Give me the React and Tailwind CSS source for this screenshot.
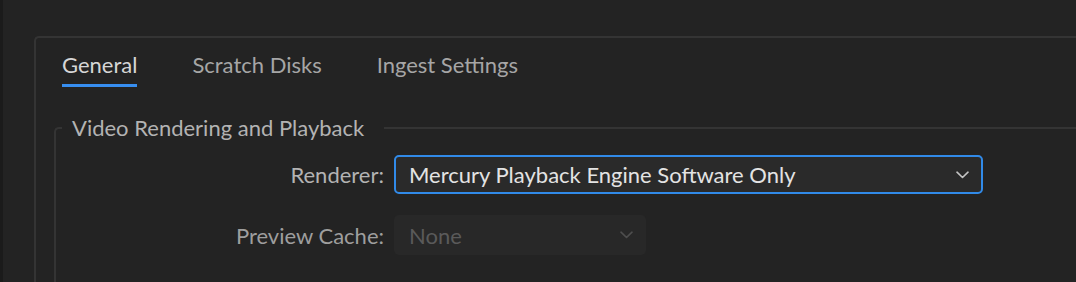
import React from "react";

const font = { fontFamily: "Lato, 'Open Sans', sans-serif" };

function Chevron({ color }) {
  return (
    <svg width="13" height="8" viewBox="0 0 13 8" fill="none">
      <path d="M1 1.2L6.5 6.5L12 1.2" stroke={color} strokeWidth="1.6" strokeLinecap="round" strokeLinejoin="round" />
    </svg>
  );
}

export default function App() {
  return (
    <div className="w-[1076px] h-[282px] bg-[#232323] flex overflow-hidden" style={font}>
      <div className="w-[3px] shrink-0 bg-[#1b1b1b]" />
      <div className="flex-1 pl-[31px] pt-[36px]">
        <div className="h-full border-t-2 border-l-2 border-[#343434] rounded-tl-[5px] pl-[26px] pt-[13px] flex flex-col">
          <div className="flex gap-[55px] text-[22px] leading-[28px]">
            <div className="flex flex-col">
              <span className="text-[#d6d6d6]">General</span>
              <div className="mt-[5px] h-[3px] bg-[#378ef0]" />
            </div>
            <span className="text-[#a6a6a6]">Scratch Disks</span>
            <span className="text-[#a6a6a6]">Ingest Settings</span>
          </div>
          <fieldset className="ml-[-8px] mt-[27px] border-t-2 border-l-2 border-[#343434] rounded-tl-[5px] pl-[6px] pt-[13px] flex-1">
            <legend className="pl-[10px] pr-[20px] text-[22px] leading-[28px] text-[#b3b3b3]">
              Video Rendering and Playback
            </legend>
            <div className="grid grid-cols-[322px_auto] gap-x-[10px] gap-y-[21px] items-center text-[22px]">
              <span className="text-right text-[#b3b3b3]">Renderer:</span>
              <div className="w-[589px] h-[39px] border-2 border-[#318ae8] rounded-[5px] bg-[#2a2a2a] flex items-center justify-between pl-[13px] pr-[12px]">
                <span className="text-[#e3e3e3]">Mercury Playback Engine Software Only</span>
                <Chevron color="#c4c4c4" />
              </div>
              <span className="text-right text-[#9e9e9e]">Preview Cache:</span>
              <div className="w-[252px] h-[40px] rounded-[5px] bg-[#282828] flex items-center justify-between pl-[15px] pr-[13px]">
                <span className="text-[#5a5a5a]">None</span>
                <Chevron color="#4e4e4e" />
              </div>
            </div>
          </fieldset>
        </div>
      </div>
    </div>
  );
}
